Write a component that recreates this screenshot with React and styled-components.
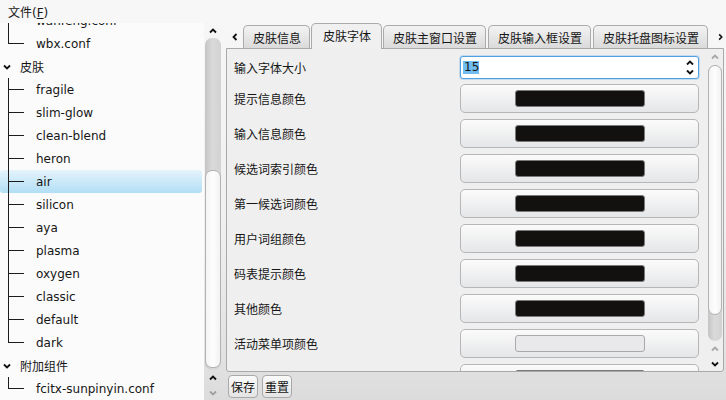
import React, { useLayoutEffect, useRef } from 'react';
import styled, { createGlobalStyle, css } from 'styled-components';

const GlobalStyle = createGlobalStyle`
  html, body { margin: 0; padding: 0; }
  body {
    font-family: "DejaVu Sans", "Noto Sans CJK SC", sans-serif;
    font-size: 12px;
    color: #161616;
  }
`;

const Window = styled.div`
  width: 726px;
  height: 400px;
  display: flex;
  flex-direction: column;
  overflow: hidden;
  background: linear-gradient(#f7f7f7 0%, #f0f0f0 55%, #e2e2e2 88%, #dcdcdc 100%);
`;

const MenuBar = styled.div`
  height: 23px;
  flex: none;
  display: flex;
  align-items: center;
  padding-left: 8px;
  background: #f7f7f7;
`;

const Main = styled.div`
  flex: 1;
  min-height: 0;
  display: flex;
`;

/* ---------- left tree ---------- */

const LeftPane = styled.div`
  width: 222px;
  flex: none;
  display: flex;
`;

const TreeView = styled.div`
  width: 204px;
  flex: none;
  overflow: hidden;
  background: #fbfbfb;
`;

const Row = styled.div`
  height: 23px;
  display: flex;
  align-items: center;
  width: 202px;
  border-radius: 3px;
  white-space: nowrap;
  ${({ $selected }) => $selected && css`
    background: linear-gradient(#e4f4fc, #b2def5);
  `}
`;

const Branch = styled.span`
  position: relative;
  width: 36px;
  align-self: stretch;
  flex: none;
  &::before {
    content: '';
    position: absolute;
    left: 8px;
    top: 0;
    width: 1px;
    height: ${({ $last }) => ($last ? '12px' : '100%')};
    background: #1c1c1c;
  }
  &::after {
    content: '';
    position: absolute;
    left: 8px;
    top: 11px;
    width: 16px;
    height: 1px;
    background: #1c1c1c;
  }
`;

const Toggle = styled.span`
  width: 20px;
  flex: none;
  display: flex;
  align-items: center;
  padding-left: 3px;
  box-sizing: border-box;
`;

const ScrollColumn = styled.div`
  width: ${({ $w }) => $w}px;
  flex: none;
  display: flex;
  flex-direction: column;
`;

const ArrowBox = styled.div`
  height: ${({ $h }) => $h}px;
  flex: none;
  display: flex;
  align-items: center;
  justify-content: center;
`;

const Groove = styled.div`
  flex: 1;
  margin: 0 1px;
  border-radius: 7px;
  background: linear-gradient(90deg, #c4c4c4, #dadada 45%, #d2d2d2);
  display: flex;
  flex-direction: column;
`;

const Thumb = styled.div`
  height: ${({ $h }) => $h}px;
  box-sizing: border-box;
  border: 1px solid #b2b2b2;
  border-radius: 7px;
  background: linear-gradient(90deg, #f4f4f4, #fdfdfd 50%, #f2f2f2);
  ${({ $end }) => $end && css`margin-top: auto; margin-bottom: 2px;`}
`;

/* ---------- right side ---------- */

const RightPane = styled.div`
  flex: 1;
  display: flex;
  flex-direction: column;
  padding: 0 2px 0 4px;
  min-width: 0;
`;

const TabBar = styled.div`
  height: 25px;
  flex: none;
  display: flex;
  align-items: flex-end;
`;

const TabArrow = styled.div`
  height: 23px;
  display: flex;
  align-items: center;
  ${({ $side }) => ($side === 'left'
    ? css`width: 17px; flex: none; justify-content: center;`
    : css`flex: 1; min-width: 0; padding-left: 7px;`)}
`;

const Tab = styled.div`
  height: 23px;
  flex: none;
  box-sizing: border-box;
  padding: 0 8px 0 9px;
  margin-right: 2px;
  display: flex;
  align-items: center;
  border: 1px solid #ababab;
  border-bottom: none;
  border-radius: 5px 5px 0 0;
  background: linear-gradient(#f3f3f3, #dadada);
  white-space: nowrap;
  ${({ $active }) => $active && css`
    height: 26px;
    padding: 0 10px 2px 11px;
    margin: 0 1px -1px -1px;
    position: relative;
    z-index: 1;
    background: #f0f0f0;
  `}
`;

const Panel = styled.div`
  height: 324px;
  flex: none;
  box-sizing: border-box;
  border: 1px solid #a9a9a9;
  border-radius: 0 0 3px 3px;
  background: #efefef;
  display: flex;
  overflow: hidden;
`;

const Form = styled.div`
  flex: 1;
  display: grid;
  grid-template-columns: 226px 239px;
  row-gap: 6px;
  align-content: start;
  padding: 7px 0 0 7px;
  overflow: hidden;
`;

const Label = styled.span`
  align-self: center;
`;

const Spin = styled.div`
  height: 23px;
  box-sizing: border-box;
  border: 1px solid #4f9fe3;
  border-radius: 3px;
  background: #fff;
  box-shadow: 0 0 0 1px rgba(120, 180, 236, 0.35);
  display: flex;
  align-items: center;
  justify-content: space-between;
  padding: 0 4px 0 2px;
  margin-bottom: -1px;
`;

const SpinValue = styled.span`
  background: #72bdef;
  line-height: 13px;
  padding: 0 0 0 1px;
`;

const SpinArrows = styled.span`
  display: flex;
  flex-direction: column;
  gap: 1px;
`;

const ColorButton = styled.div`
  height: 29px;
  box-sizing: border-box;
  border: 1px solid #b5b6b8;
  border-radius: 5px;
  background: linear-gradient(#fbfbfb, #e5e6e8);
  display: flex;
  align-items: center;
  justify-content: center;
`;

const Swatch = styled.span`
  width: 130px;
  height: 17px;
  box-sizing: border-box;
  border-radius: 3px;
  border: 1px solid ${({ $color }) => ($color === 'light' ? '#a9a9ab' : '#7a7a7a')};
  background: ${({ $color }) => ($color === 'light' ? '#e9e9eb' : '#121110')};
`;

const BottomBar = styled.div`
  flex: 1;
  display: flex;
  align-items: flex-start;
  gap: 4px;
  padding: 3px 0 0 2px;
`;

const PushButton = styled.button`
  height: 23px;
  padding: 0 2px;
  font: inherit;
  color: inherit;
  border: 1px solid #a9a9a9;
  border-radius: 4px;
  background: linear-gradient(#fafafa, #e4e4e4);
`;

const Chevron = ({ dir = 'up', color = '#111' }) => {
  const pts = {
    up: '1,5.5 4,2.5 7,5.5',
    down: '1,2.5 4,5.5 7,2.5',
    left: '5.5,1 2.5,4 5.5,7',
    right: '2.5,1 5.5,4 2.5,7',
  }[dir];
  return (
    <svg width="8" height="8" viewBox="0 0 8 8">
      <polyline points={pts} fill="none" stroke={color} strokeWidth="1.8" />
    </svg>
  );
};

const tree = [
  { label: '码表', children: ['cangjie.conf', 'erbi.conf', 'qxm.conf', 'wanfeng.conf', 'wbx.conf'] },
  {
    label: '皮肤',
    children: ['fragile', 'slim-glow', 'clean-blend', 'heron', 'air', 'silicon', 'aya', 'plasma', 'oxygen', 'classic', 'default', 'dark'],
  },
  { label: '附加组件', children: ['fcitx-sunpinyin.conf'] },
];

const tabs = ['皮肤信息', '皮肤字体', '皮肤主窗口设置', '皮肤输入框设置', '皮肤托盘图标设置'];

const colorRows = [
  ['提示信息颜色', 'dark'],
  ['输入信息颜色', 'dark'],
  ['候选词索引颜色', 'dark'],
  ['第一候选词颜色', 'dark'],
  ['用户词组颜色', 'dark'],
  ['码表提示颜色', 'dark'],
  ['其他颜色', 'dark'],
  ['活动菜单项颜色', 'light'],
  ['活动菜单项文字颜色', 'dark'],
];

const App = () => {
  const treeRef = useRef(null);

  useLayoutEffect(() => {
    if (treeRef.current) treeRef.current.scrollTop = 106;
  }, []);

  return (
    <>
      <GlobalStyle />
      <Window>
        <MenuBar>
          <span>文件(<u>F</u>)</span>
        </MenuBar>
        <Main>
          <LeftPane>
            <TreeView ref={treeRef}>
              {tree.map((group) => (
                <React.Fragment key={group.label}>
                  <Row>
                    <Toggle><Chevron dir="down" /></Toggle>
                    {group.label}
                  </Row>
                  {group.children.map((item, i) => (
                    <Row key={item} $selected={item === 'air'}>
                      <Branch $last={i === group.children.length - 1} />
                      {item}
                    </Row>
                  ))}
                </React.Fragment>
              ))}
            </TreeView>
            <ScrollColumn $w={18}>
              <ArrowBox $h={15}><Chevron dir="up" /></ArrowBox>
              <Groove>
                <Thumb $h={198} $end />
              </Groove>
              <ArrowBox $h={15}><Chevron dir="up" /></ArrowBox>
              <ArrowBox $h={15}><Chevron dir="down" color="#a0a0a0" /></ArrowBox>
            </ScrollColumn>
          </LeftPane>

          <RightPane>
            <TabBar>
              <TabArrow $side="left"><Chevron dir="left" /></TabArrow>
              {tabs.map((t) => (
                <Tab key={t} $active={t === '皮肤字体'}>{t}</Tab>
              ))}
              <TabArrow $side="right"><Chevron dir="right" /></TabArrow>
            </TabBar>
            <Panel>
              <Form>
                <Label>输入字体大小</Label>
                <Spin>
                  <SpinValue>15</SpinValue>
                  <SpinArrows>
                    <Chevron dir="up" />
                    <Chevron dir="down" />
                  </SpinArrows>
                </Spin>
                {colorRows.map(([label, color]) => (
                  <React.Fragment key={label}>
                    <Label>{label}</Label>
                    <ColorButton><Swatch $color={color} /></ColorButton>
                  </React.Fragment>
                ))}
              </Form>
              <ScrollColumn $w={16}>
                <ArrowBox $h={16}><Chevron dir="up" color="#a8a8a8" /></ArrowBox>
                <Groove>
                  <Thumb $h={250} />
                </Groove>
                <ArrowBox $h={15}><Chevron dir="up" color="#a8a8a8" /></ArrowBox>
                <ArrowBox $h={15}><Chevron dir="down" /></ArrowBox>
              </ScrollColumn>
            </Panel>
            <BottomBar>
              <PushButton>保存</PushButton>
              <PushButton>重置</PushButton>
            </BottomBar>
          </RightPane>
        </Main>
      </Window>
    </>
  );
};

export default App;
